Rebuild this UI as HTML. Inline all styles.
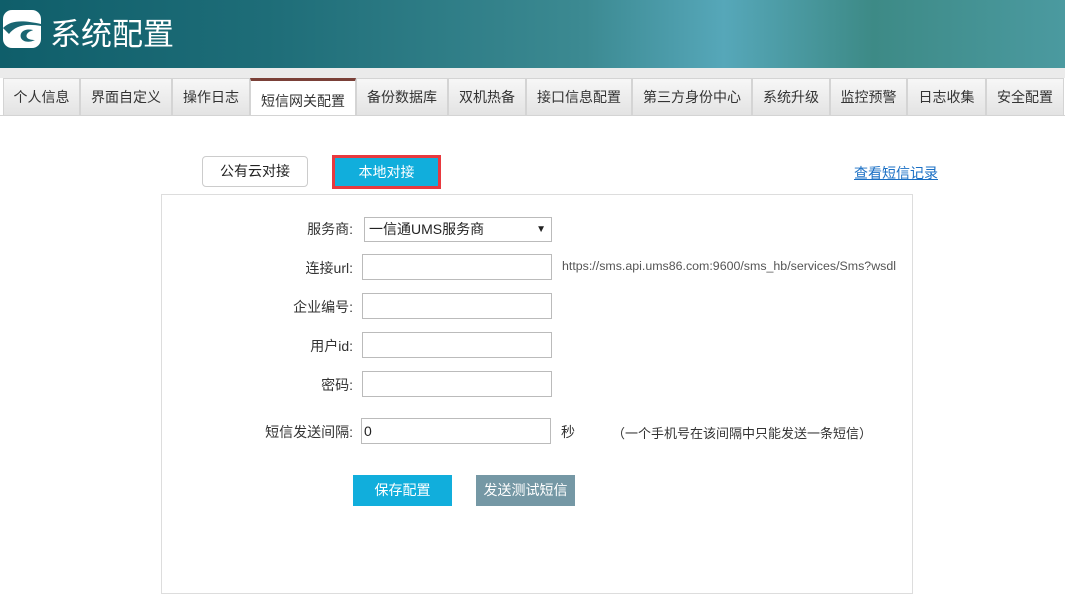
<!DOCTYPE html>
<html><head><meta charset="utf-8"><style>
body{margin:0;width:1065px;height:574px;overflow:hidden;background:#fff;font-family:"Liberation Sans","Noto Sans CJK SC",sans-serif;font-size:13px;color:#333;position:relative}
.hd{position:absolute;left:0;top:0;width:1065px;height:68px;background:linear-gradient(90deg,#0f5e6a 0%,#1e6d78 25%,#3c8a92 55%,#56a7b9 68%,#3d8a86 82%,#4b9aa0 100%)}
.hd .t{position:absolute;left:50px;top:11px;font-size:31px;color:#fff;font-family:"Noto Sans CJK SC",sans-serif;line-height:42px}
.strip{position:absolute;left:0;top:68px;width:1065px;height:10px;background:#ebebeb}
.tab{position:absolute;top:78px;border:1px solid #d4d4d4;background:linear-gradient(#f7f7f7,#e3e3e3);text-align:center;line-height:37px;font-size:14px;color:#333;box-sizing:border-box;height:38px}
.tab.on{background:#fff;border-top:3px solid #7a4038;line-height:40px;border-bottom:none}
.abs{position:absolute}
.inp{position:absolute;height:26px;border:1px solid #bbb;box-sizing:border-box;background:#fff;width:190px;left:362px}
.lb{position:absolute;text-align:right;width:160px;left:193px;font-size:14px;color:#333}
</style></head><body>
<div class="hd">
<svg class="abs" style="left:3px;top:10px" width="38" height="38" viewBox="0 0 38 38"><rect x="0" y="0" width="38" height="38" rx="9" fill="#fff"/><path d="M0 18 C8 10 20 10 38 14 L38 16 C22 13 12 16 6 24 Z" fill="#1a6672"/><path d="M30 20 C22 18 16 22 18 28 C20 32 26 33 32 30 C26 30 22 28 24 24 C26 21 29 21 30 20Z" fill="#1a6672"/></svg>
<div class="t">系统配置</div></div>
<div class="strip"></div>
<div class="tab" style="left:3px;width:77px">个人信息</div>
<div class="tab" style="left:80px;width:92px">界面自定义</div>
<div class="tab" style="left:172px;width:78px">操作日志</div>
<div class="tab on" style="left:250px;width:106px">短信网关配置</div>
<div class="tab" style="left:356px;width:92px">备份数据库</div>
<div class="tab" style="left:448px;width:78px">双机热备</div>
<div class="tab" style="left:526px;width:106px">接口信息配置</div>
<div class="tab" style="left:632px;width:120px">第三方身份中心</div>
<div class="tab" style="left:752px;width:78px">系统升级</div>
<div class="tab" style="left:830px;width:77px">监控预警</div>
<div class="tab" style="left:907px;width:79px">日志收集</div>
<div class="tab" style="left:986px;width:78px">安全配置</div>
<div class="abs" style="left:0;top:115px;width:1065px;height:1px;background:#d4d4d4"></div>
<div class="abs" style="left:202px;top:156px;width:106px;height:31px;border:1px solid #ccc;border-radius:4px;box-sizing:border-box;text-align:center;line-height:29px;font-size:14px;color:#222">公有云对接</div>
<div class="abs" style="left:332px;top:155px;width:109px;height:34px;border:3px solid #e8393f;background:#11aedc;box-sizing:border-box;text-align:center;line-height:28px;font-size:14px;color:#fff">本地对接</div>
<div class="abs" style="left:854px;top:163px;font-size:14px;color:#1a6fc4;text-decoration:underline">查看短信记录</div>
<div class="abs" style="left:161px;top:194px;width:752px;height:400px;border:1px solid #ddd;box-sizing:border-box"></div>
<div class="lb" style="top:219px">服务商:</div>
<div class="inp" style="left:364px;top:217px;width:188px;height:25px;font-size:14px;line-height:23px;padding-left:4px;color:#222">一信通UMS服务商<span class="abs" style="right:5px;top:0;font-size:10px">▼</span></div>
<div class="lb" style="top:258px">连接url:</div>
<div class="inp" style="top:254px"></div>
<div class="abs" style="left:562px;top:259px;font-size:12.4px;color:#555">https://sms.api.ums86.com:9600/sms_hb/services/Sms?wsdl</div>
<div class="lb" style="top:297px">企业编号:</div>
<div class="inp" style="top:293px"></div>
<div class="lb" style="top:336px">用户id:</div>
<div class="inp" style="top:332px"></div>
<div class="lb" style="top:375px">密码:</div>
<div class="inp" style="top:371px"></div>
<div class="lb" style="top:422px">短信发送间隔:</div>
<div class="inp" style="left:361px;top:418px;width:190px;font-size:14px;line-height:24px;padding-left:2px;color:#222">0</div>
<div class="abs" style="left:561px;top:422px;font-size:14px">秒</div>
<div class="abs" style="left:612px;top:423px;font-size:13px">（一个手机号在该间隔中只能发送一条短信）</div>
<div class="abs" style="left:353px;top:475px;width:99px;height:31px;background:#11aedc;color:#fff;text-align:center;line-height:31px;font-size:14px">保存配置</div>
<div class="abs" style="left:476px;top:475px;width:99px;height:31px;background:#7598a5;color:#fff;text-align:center;line-height:31px;font-size:14px">发送测试短信</div>
</body></html>
